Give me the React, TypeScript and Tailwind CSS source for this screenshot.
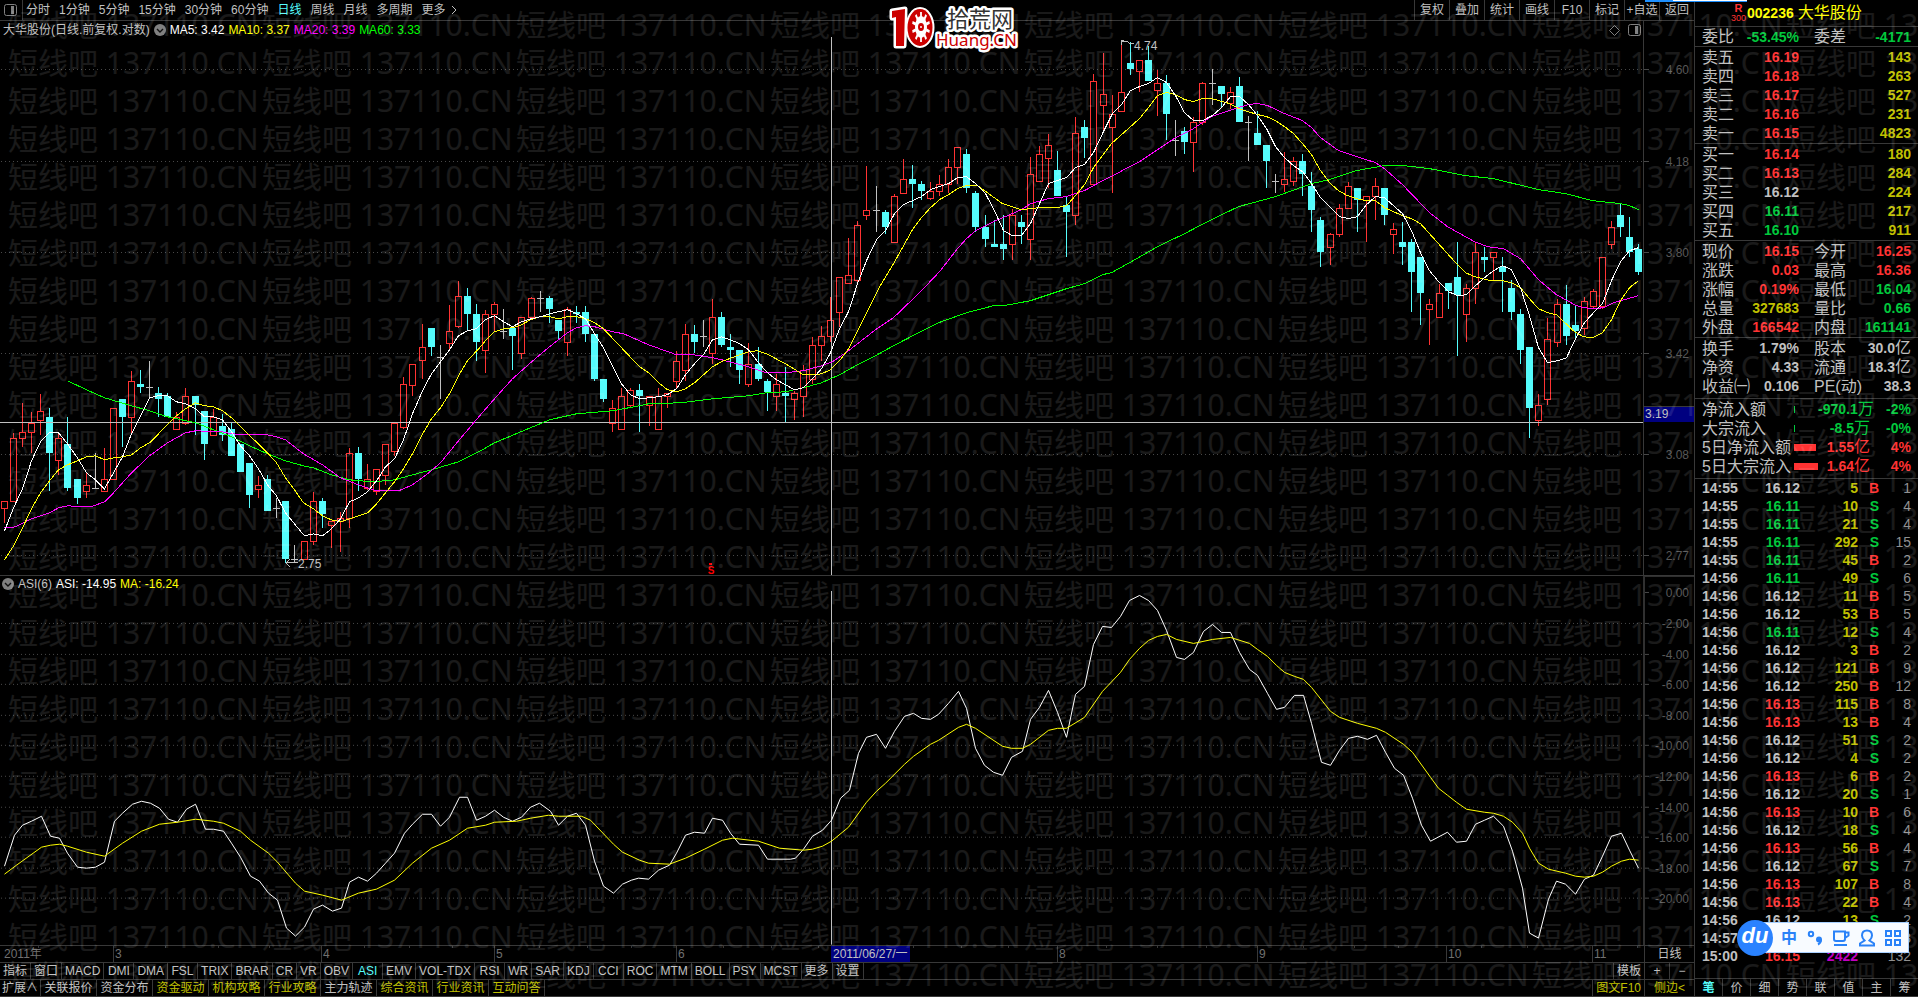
type Kind = "r" | "c" | "d";
// kind (rise, fall, doji), then y of high, body top, body bottom, low
type Candle = [Kind, number, number, number, number];

const candles: Candle[] = [
  ["r", 501, 501, 508, 523], ["r", 433, 438, 501, 501], ["r", 403, 432, 438, 447], ["r", 412, 423, 432, 453],
  ["r", 394, 411, 420, 435], ["c", 408, 417, 453, 491], ["r", 433, 438, 460, 475], ["c", 417, 444, 488, 491],
  ["c", 479, 479, 498, 504], ["r", 473, 485, 491, 498], ["d", 453, 488, 488, 489], ["r", 448, 479, 491, 491],
  ["r", 408, 408, 479, 479], ["c", 399, 399, 417, 447], ["r", 371, 381, 417, 433], ["c", 370, 384, 387, 393],
  ["d", 361, 387, 387, 397], ["c", 387, 393, 399, 417], ["c", 393, 396, 417, 417], ["r", 412, 417, 429, 429],
  ["r", 388, 396, 423, 425], ["c", 396, 396, 405, 435], ["c", 411, 411, 444, 460], ["r", 409, 417, 435, 435],
  ["c", 414, 426, 435, 441], ["c", 423, 429, 456, 456], ["c", 444, 444, 472, 472], ["c", 463, 463, 495, 508],
  ["r", 476, 485, 489, 498], ["c", 475, 479, 511, 511], ["d", 498, 508, 508, 518], ["c", 501, 501, 559, 563],
  ["d", 545, 559, 559, 563], ["r", 541, 541, 559, 559], ["r", 492, 501, 541, 545], ["c", 498, 501, 514, 528],
  ["r", 521, 521, 525, 548], ["r", 512, 518, 521, 552], ["r", 448, 453, 518, 528], ["c", 447, 453, 479, 491],
  ["r", 464, 479, 488, 490], ["r", 469, 469, 491, 495], ["r", 444, 444, 475, 485], ["r", 423, 423, 451, 456],
  ["r", 377, 384, 427, 429], ["r", 364, 364, 385, 396], ["r", 324, 347, 360, 379], ["c", 328, 328, 347, 356],
  ["d", 345, 357, 357, 399], ["r", 305, 331, 343, 349], ["r", 281, 296, 326, 328], ["c", 288, 296, 314, 330],
  ["c", 304, 314, 342, 361], ["r", 310, 314, 350, 373], ["r", 302, 304, 314, 332], ["d", 309, 331, 331, 339],
  ["c", 328, 328, 336, 370], ["r", 317, 317, 353, 359], ["r", 297, 298, 317, 317], ["d", 291, 298, 298, 312],
  ["c", 296, 298, 309, 323], ["c", 320, 320, 331, 339], ["r", 307, 309, 342, 356], ["c", 306, 312, 314, 323],
  ["c", 306, 312, 334, 342], ["c", 334, 334, 379, 381], ["c", 379, 379, 399, 402], ["r", 400, 408, 423, 432],
  ["r", 388, 396, 429, 429], ["r", 388, 390, 405, 408], ["c", 384, 390, 396, 432], ["r", 396, 396, 405, 426],
  ["r", 388, 396, 429, 429], ["r", 393, 393, 396, 408], ["r", 351, 361, 381, 388], ["r", 324, 334, 370, 381],
  ["c", 325, 334, 342, 353], ["d", 320, 336, 336, 347], ["r", 299, 317, 353, 364], ["c", 312, 317, 345, 347],
  ["c", 334, 347, 350, 367], ["c", 350, 350, 370, 384], ["r", 343, 364, 384, 387], ["c", 347, 364, 379, 381],
  ["c", 379, 381, 392, 411], ["r", 374, 384, 396, 411], ["c", 367, 393, 396, 422], ["r", 391, 393, 399, 420],
  ["r", 365, 370, 396, 417], ["r", 337, 345, 379, 384], ["r", 326, 336, 345, 361], ["r", 297, 320, 336, 342],
  ["r", 277, 277, 312, 327], ["r", 238, 275, 283, 283], ["r", 221, 225, 280, 283], ["r", 166, 210, 215, 220],
  ["d", 186, 210, 210, 232], ["c", 210, 212, 227, 234], ["r", 194, 196, 242, 242], ["r", 159, 179, 193, 193],
  ["c", 165, 179, 184, 208], ["c", 181, 184, 191, 200], ["r", 182, 191, 198, 200], ["r", 175, 184, 191, 196],
  ["r", 159, 167, 184, 193], ["r", 147, 147, 167, 184], ["c", 149, 154, 188, 193], ["c", 191, 193, 227, 232],
  ["c", 215, 227, 239, 247], ["c", 220, 244, 247, 247], ["c", 215, 244, 249, 260], ["r", 209, 215, 244, 260],
  ["c", 215, 222, 227, 244], ["r", 157, 174, 239, 260], ["r", 146, 154, 181, 181], ["r", 134, 145, 158, 188],
  ["c", 151, 170, 196, 196], ["c", 196, 205, 212, 257], ["r", 117, 133, 215, 225], ["c", 120, 127, 138, 158],
  ["r", 74, 81, 184, 184], ["r", 53, 94, 105, 130], ["r", 95, 114, 127, 193], ["r", 40, 92, 111, 111],
  ["c", 42, 63, 69, 75], ["r", 60, 60, 71, 92], ["c", 46, 60, 81, 81], ["r", 70, 83, 90, 116],
  ["c", 75, 83, 114, 140], ["d", 120, 140, 140, 156], ["c", 127, 131, 142, 154], ["r", 117, 122, 142, 172],
  ["r", 82, 83, 122, 125], ["d", 69, 83, 83, 105], ["c", 86, 86, 94, 107], ["r", 87, 92, 103, 109],
  ["c", 77, 86, 122, 122], ["d", 116, 122, 122, 161], ["c", 111, 133, 145, 145], ["c", 145, 145, 161, 188],
  ["d", 174, 181, 181, 193], ["r", 152, 179, 184, 192], ["r", 157, 161, 181, 186], ["c", 154, 161, 174, 196],
  ["c", 172, 186, 210, 232], ["c", 217, 220, 252, 267], ["r", 233, 234, 247, 265], ["r", 204, 208, 234, 237],
  ["r", 182, 186, 208, 208], ["c", 188, 188, 200, 232], ["r", 196, 196, 200, 242], ["r", 178, 186, 196, 220],
  ["c", 188, 188, 215, 225], ["r", 223, 229, 234, 254], ["c", 222, 242, 247, 265], ["c", 239, 242, 272, 312],
  ["c", 257, 257, 293, 325], ["r", 299, 304, 309, 345], ["r", 284, 293, 317, 317], ["c", 283, 283, 291, 309],
  ["c", 242, 277, 295, 356], ["r", 284, 288, 314, 342], ["r", 243, 252, 288, 304], ["c", 247, 257, 260, 272],
  ["r", 252, 252, 257, 280], ["c", 257, 267, 272, 312], ["c", 280, 288, 312, 320], ["c", 309, 314, 350, 364],
  ["c", 347, 347, 408, 438], ["r", 394, 405, 420, 426], ["r", 318, 339, 399, 405], ["r", 299, 304, 342, 347],
  ["c", 285, 304, 336, 345], ["c", 306, 325, 331, 339], ["r", 297, 301, 328, 335], ["r", 289, 291, 306, 309],
  ["r", 257, 257, 306, 309], ["r", 221, 227, 244, 249], ["c", 203, 215, 227, 237], ["c", 217, 237, 252, 257],
  ["c", 244, 249, 272, 275],
];

const ma5 = [
  530, 507, 488, 460, 441, 432, 432, 443, 457, 472, 479, 488, 472, 456, 433, 415, 397, 395, 395, 401,
  403, 408, 416, 416, 419, 431, 445, 455, 468, 484, 495, 512, 523, 535, 533, 535, 528, 518, 501, 497,
  491, 480, 466, 458, 439, 413, 390, 373, 361, 349, 335, 330, 328, 319, 315, 321, 326, 321, 318, 316,
  313, 311, 309, 313, 318, 333, 347, 365, 383, 394, 398, 397, 396, 394, 388, 374, 363, 354, 339, 336,
  339, 343, 349, 362, 372, 379, 384, 389, 387, 378, 368, 352, 328, 311, 283, 260, 239, 230, 213, 204,
  200, 196, 189, 186, 183, 177, 176, 183, 193, 210, 230, 235, 235, 223, 203, 183, 180, 177, 167, 164,
  152, 131, 113, 104, 90, 86, 83, 77, 82, 95, 112, 120, 120, 115, 107, 96, 96, 104, 115, 128,
  146, 157, 165, 171, 183, 197, 207, 216, 218, 216, 204, 196, 197, 205, 213, 230, 252, 270, 282, 291,
  295, 294, 285, 277, 270, 265, 269, 287, 315, 347, 362, 360, 357, 338, 322, 312, 303, 280, 261, 250,
  247,
];

const ma10 =
  "4,559 13,545 22,527 31,508 40,492 49,480 58,469 67,464 77,460 86,456 95,455 104,459 113,457 122,456 131,454 140,447 149,442 158,433 167,424 176,415 185,408 195,402 204,405 213,406 222,410 231,417 240,426 249,435 258,443 267,452 276,462 285,477 294,489 303,502 313,508 322,515 331,519 340,521 349,518 358,515 367,512 376,503 385,492 394,481 403,468 412,453 421,435 431,418 440,407 449,393 458,375 467,360 480,346 485,340 494,331 503,328 512,327 521,324 530,319 539,316 549,316 558,318 567,316 576,316 585,318 594,322 603,328 621,347 639,366 648,372 657,381 667,389 676,391 685,388 694,382 712,366 721,361 739,354 748,351 757,350 766,353 785,363 803,374 815,374 821,373 830,369 839,360 848,348 857,330 878,288 893,263 912,229 921,217 930,207 939,199 948,194 957,188 966,185 977,185 984,190 1002,203 1011,206 1021,209 1039,207 1057,207 1066,205 1075,195 1084,184 1093,167 1102,155 1111,143 1129,127 1139,118 1148,107 1157,95 1166,92 1175,94 1184,99 1193,101 1202,98 1211,98 1229,103 1238,108 1257,114 1266,116 1275,120 1284,126 1293,133 1302,143 1311,154 1320,170 1329,182 1338,190 1347,195 1356,198 1366,200 1375,200 1384,207 1402,215 1411,218 1420,223 1438,243 1456,263 1465,272 1474,276 1490,280 1502,280 1511,282 1520,287 1529,298 1538,308 1547,312 1556,314 1574,331 1583,336 1592,337 1602,332 1611,319 1620,300 1629,287 1638,280";
const ma20 =
  "4,527 15,526 31,518 49,512 58,507 67,505 90,506 104,501 113,492 131,472 149,455 167,442 185,432 195,430 222,431 231,433 249,434 267,434 276,436 285,439 303,453 322,464 340,477 358,484 376,490 398,490 412,484 427,473 440,462 458,440 480,414 494,398 512,378 530,362 549,346 567,332 576,327 585,325 594,326 612,331 623,333 648,344 676,354 693,354 712,357 721,359 748,366 766,372 785,372 803,370 821,365 832,361 848,350 875,329 893,317 920,291 939,271 957,248 966,238 975,230 993,221 1021,209 1030,203 1048,198 1066,196 1084,190 1102,180 1120,171 1129,166 1139,161 1157,149 1175,137 1193,128 1211,116 1220,113 1238,107 1248,104 1257,103 1267,105 1284,113 1302,120 1311,127 1320,137 1338,150 1356,156 1375,162 1384,168 1402,184 1429,212 1447,226 1474,241 1487,246 1503,248 1520,258 1538,279 1556,294 1574,304 1583,307 1593,308 1603,307 1613,302 1638,295";
const ma60 =
  "67,380 86,389 104,397 131,405 149,410 167,416 195,422 213,429 231,436 249,445 267,453 285,460 303,465 313,467 331,474 349,479 372,481 394,479 412,474 431,469 458,461 480,450 494,442 530,427 549,419 576,413 612,410 639,405 648,403 680,402 712,398 748,395 766,392 785,391 803,387 821,382 839,374 857,364 875,355 893,345 920,331 938,322 966,312 993,305 1003,305 1030,300 1057,291 1066,288 1084,283 1102,274 1111,272 1129,262 1157,246 1184,233 1211,219 1238,206 1275,196 1300,187 1311,183 1329,179 1356,170 1384,165 1403,165 1429,168 1465,175 1493,178 1538,189 1565,193 1592,200 1620,203 1629,205 1638,209";

const asi =
  "4,866 14,835 22,825 31,821 41,816 50,836 59,838 67,853 77,867 86,868 95,867 104,862 114,821 122,813 132,804 141,801 150,803 159,808 168,819 177,822 186,809 195,804 205,829 213,829 223,831 231,843 240,857 250,876 259,881 268,893 277,900 286,928 295,936 304,927 313,909 322,905 332,911 341,908 349,882 358,877 367,881 376,873 385,863 394,853 404,833 412,824 422,814 431,814 440,826 449,817 459,797 467,797 476,820 485,816 494,810 503,817 512,821 521,817 530,807 539,803 550,811 558,825 567,816 576,813 585,825 594,861 603,886 613,893 622,884 631,880 638,878 648,879 658,870 669,865 676,853 685,835 694,832 704,833 712,818 722,820 730,833 739,844 758,845 767,859 790,859 795,858 803,849 812,836 822,830 831,820 840,798 849,790 858,753 866,737 876,734 885,748 894,731 904,716 913,713 921,718 930,719 938,714 948,703 958,691 966,708 975,748 984,765 993,772 1002,775 1011,757 1022,751 1030,719 1039,707 1048,690 1057,712 1066,737 1075,694 1084,686 1093,644 1102,626 1111,627 1120,616 1129,600 1139,595 1148,600 1157,610 1166,630 1176,657 1184,659 1193,652 1203,631 1212,624 1221,632 1230,632 1239,652 1249,669 1257,675 1267,693 1276,709 1284,707 1294,695 1303,695 1311,723 1321,762 1330,765 1339,750 1348,738 1357,736 1367,739 1376,735 1385,752 1394,768 1403,775 1412,798 1421,825 1430,841 1447,832 1456,842 1466,841 1475,824 1484,820 1493,816 1503,826 1512,851 1522,888 1529,933 1538,938 1548,899 1556,881 1565,884 1575,894 1584,879 1593,875 1602,856 1611,836 1621,833 1629,850 1638,868";
const asiMa =
  "4,874 16,865 41,847 50,845 59,844 67,846 86,852 104,856 122,843 141,831 159,824 177,822 195,819 213,821 223,823 240,831 250,840 268,853 277,862 295,883 304,891 322,895 341,900 358,893 376,889 394,880 412,863 431,848 449,840 467,828 485,825 494,822 516,821 530,818 548,815 558,816 581,816 590,820 613,844 622,852 639,860 648,863 669,864 685,858 704,849 722,840 732,838 758,841 779,848 803,850 812,849 822,846 831,841 848,827 866,802 876,791 885,783 904,764 913,756 930,744 938,740 958,727 966,724 975,728 1002,746 1011,748 1022,748 1030,744 1048,730 1057,728 1066,728 1084,717 1102,691 1120,672 1129,659 1139,648 1148,640 1157,636 1166,634 1176,639 1193,643 1212,639 1230,637 1249,643 1257,649 1267,656 1276,665 1284,672 1294,676 1303,679 1311,687 1330,711 1339,717 1357,723 1376,728 1385,732 1403,744 1412,752 1430,777 1438,788 1447,795 1456,802 1466,809 1484,812 1493,813 1503,816 1512,822 1522,833 1529,848 1538,863 1548,869 1565,873 1575,876 1584,877 1593,876 1602,872 1611,866 1621,861 1629,859 1638,860";

const candleX = (i: number) => Math.floor(4.38 + 9.08 * i);

const priceTicks: [string, number][] = [
  ["4.60", 69], ["4.18", 161], ["3.80", 252], ["3.42", 353], ["3.08", 454], ["2.77", 555],
];
const asiTicks: [string, number][] = [
  ["0.00", 592], ["-2.00", 623], ["-4.00", 654], ["-6.00", 684], ["-8.00", 715], ["-10.00", 745],
  ["-12.00", 776], ["-14.00", 807], ["-16.00", 837], ["-18.00", 868], ["-20.00", 898],
];
const months: [string, number][] = [
  ["3", 113], ["4", 321], ["5", 494], ["6", 676], ["8", 1057], ["9", 1257], ["10", 1446], ["11", 1592],
];
const weekTicks = [
  38, 165, 218, 269, 364, 409, 452, 539, 587, 631, 723, 771, 818, 913, 961, 1008, 1106, 1157, 1206, 1303,
  1354, 1398, 1481, 1527, 1637,
];

const periods = ["分时", "1分钟", "5分钟", "15分钟", "30分钟", "60分钟", "日线", "周线", "月线", "多周期", "更多"];
const tools = ["复权", "叠加", "统计", "画线", "F10", "标记", "+自选", "返回"];
const indicators = [
  "指标", "窗口", "MACD", "DMI", "DMA", "FSL", "TRIX", "BRAR", "CR", "VR", "OBV", "ASI", "EMV", "VOL-TDX",
  "RSI", "WR", "SAR", "KDJ", "CCI", "ROC", "MTM", "BOLL", "PSY", "MCST", "更多", "设置",
];
const links: [string, boolean][] = [
  ["扩展∧", false], ["关联报价", false], ["资金分布", false], ["资金驱动", true], ["机构攻略", true],
  ["行业攻略", true], ["主力轨迹", false], ["综合资讯", true], ["行业资讯", true], ["互动问答", true],
];
const sideTabs = ["笔", "价", "细", "势", "联", "值", "主", "筹"];

const RED = "text-[#ff3232]";
const GREEN = "text-[#00c83c]";
const GRAY = "text-[#c0c0c0]";
const OLIVE = "text-[#c0c000]";

const sells = [
  ["卖五", "16.19", "143", RED], ["卖四", "16.18", "263", RED], ["卖三", "16.17", "527", RED],
  ["卖二", "16.16", "231", RED], ["卖一", "16.15", "4823", RED],
];
const buys = [
  ["买一", "16.14", "180", RED], ["买二", "16.13", "284", RED], ["买三", "16.12", "224", GRAY],
  ["买四", "16.11", "217", GREEN], ["买五", "16.10", "911", GREEN],
];
const quotes = [
  ["现价", "16.15", RED, "今开", "16.25", RED],
  ["涨跌", "0.03", RED, "最高", "16.36", RED],
  ["涨幅", "0.19%", RED, "最低", "16.04", GREEN],
  ["总量", "327683", OLIVE, "量比", "0.66", GREEN],
  ["外盘", "166542", RED, "内盘", "161141", GREEN],
];
const stats = [
  ["换手", "1.79%", GRAY, "股本", "30.0亿", GRAY],
  ["净资", "4.33", GRAY, "流通", "18.3亿", GRAY],
  ["收益㈠", "0.106", GRAY, "PE(动)", "38.3", GRAY],
];
const flows: [string, number, string, string, string][] = [
  ["净流入额", 1, "-970.1万", "-2%", GREEN],
  ["大宗流入", 1, "-8.5万", "-0%", GREEN],
  ["5日净流入额", 22, "1.55亿", "4%", RED],
  ["5日大宗流入", 24, "1.64亿", "4%", RED],
];
const ticks: [string, string, number, string, number][] = [
  ["14:55", "16.12", 5, "B", 1], ["14:55", "16.11", 10, "S", 4], ["14:55", "16.11", 21, "S", 4],
  ["14:55", "16.11", 292, "S", 15], ["14:55", "16.11", 45, "B", 2], ["14:56", "16.11", 49, "S", 6],
  ["14:56", "16.12", 11, "B", 5], ["14:56", "16.12", 53, "B", 5], ["14:56", "16.11", 12, "S", 4],
  ["14:56", "16.12", 3, "B", 2], ["14:56", "16.12", 121, "B", 9], ["14:56", "16.12", 250, "B", 12],
  ["14:56", "16.13", 115, "B", 8], ["14:56", "16.13", 13, "B", 4], ["14:56", "16.12", 51, "S", 2],
  ["14:56", "16.12", 4, "S", 2], ["14:56", "16.13", 6, "B", 2], ["14:56", "16.12", 20, "S", 1],
  ["14:56", "16.13", 10, "B", 6], ["14:56", "16.12", 18, "S", 4], ["14:56", "16.13", 56, "B", 4],
  ["14:56", "16.12", 67, "S", 7], ["14:56", "16.13", 107, "B", 8], ["14:56", "16.13", 22, "B", 4],
  ["14:56", "16.12", 13, "S", 2], ["14:57", "16.12", 24, "B", 3], ["15:00", "16.15", 2422, "", 132],
];

function priceColor(price: string) {
  if (price > "16.12") return RED;
  if (price < "16.12") return GREEN;
  return GRAY;
}

function PanelIcon() {
  return (
    <svg width="13" height="12" viewBox="0 0 13 12" fill="none" stroke="#808080">
      <rect x="0.5" y="0.5" width="12" height="11" rx="2" />
      <rect x="7" y="2" width="3" height="8" fill="#808080" stroke="none" />
    </svg>
  );
}

function Chevron() {
  return (
    <svg width="12" height="12" viewBox="0 0 12 12">
      <circle cx="6" cy="6" r="6" fill="#808080" />
      <path d="M3 5l3 3 3-3" fill="none" stroke="#101010" strokeWidth="1.4" />
    </svg>
  );
}

function CandleMark({ candle, x }: { candle: Candle; x: number }) {
  const [kind, high, top, bottom, low] = candle;
  const color = kind === "r" ? "#ff3232" : kind === "c" ? "#54fcfc" : "#c0c0c0";
  if (kind === "r") {
    return (
      <g fill={color}>
        <rect x={x} y={high} width="1" height={top - high} />
        <rect x={x} y={bottom} width="1" height={low - bottom} />
        <rect x={x - 2.5} y={top + 0.5} width="6" height={bottom - top} fill="none" stroke={color} />
      </g>
    );
  }
  return (
    <g fill={color}>
      <rect x={x} y={high} width="1" height={low - high} />
      <rect x={x - 3} y={top} width="7" height={Math.max(1, bottom - top)} />
    </g>
  );
}

function Axis({ marks, grid }: { marks: [string, number][]; grid: number }) {
  return (
    <g>
      {marks.map(([label, y], i) => (
        <g key={label}>
          {i >= grid && (
            <line x1="1" x2="1643" y1={y + 0.5} y2={y + 0.5} stroke="#484848" strokeDasharray="1 3" />
          )}
          <line x1="1644" x2="1649" y1={y + 0.5} y2={y + 0.5} stroke="#484848" />
          <text x="1689" y={y + 5} textAnchor="end" fontSize="12" fill="#585858">
            {label}
          </text>
        </g>
      ))}
    </g>
  );
}

function PriceChart() {
  return (
    <svg
      className="block h-full w-full"
      viewBox="0 21 1694 554"
      preserveAspectRatio="none"
      shapeRendering="crispEdges"
      role="img"
      aria-label="日线"
    >
      <Axis marks={priceTicks} grid={0} />
      <line x1="1643.5" x2="1643.5" y1="21" y2="575" stroke="#383838" />
      {candles.map((c, i) => (
        <CandleMark key={i} candle={c} x={candleX(i)} />
      ))}
      <line x1="0" x2="1643" y1="422.5" y2="422.5" stroke="#c0c0c0" />
      <line x1="831.5" x2="831.5" y1="37" y2="575" stroke="#c0c0c0" />
      <g fill="none" transform="translate(0.5 0.5)">
        <polyline points={ma60} stroke="#00ff00" />
        <polyline points={ma20} stroke="#ff00ff" />
        <polyline points={ma10} stroke="#ffff00" />
        <polyline points={ma5.map((y, i) => `${candleX(i)},${y}`).join(" ")} stroke="#ffffff" />
      </g>
      <g fill="none" stroke="#c0c0c0">
        <path d="M1121.5 41.5h6l2 2h4M1121.5 40v5M1121.5 41.5l3 -2" />
        <path d="M286.5 562.5h11M290 558.500l-4 4 4 4" />
      </g>
      <g fontSize="12" fill="#c0c0c0">
        <text x="1134" y="50">4.74</text>
        <text x="298" y="568">2.75</text>
      </g>
      <rect x="709" y="563" width="3" height="2" fill="#ff0000" />
      <text x="711" y="574" fontSize="10" fontWeight="700" textAnchor="middle" fill="#ff0000">
        S
      </text>
      <rect x="1644" y="406" width="50" height="16" fill="#000080" />
      <line x1="1644" x2="1694" y1="406.5" y2="406.5" stroke="#383838" />
      <text x="1645" y="418" fontSize="12" fill="#c0c0c0">
        3.19
      </text>
    </svg>
  );
}

function AsiChart() {
  return (
    <svg
      className="block h-full w-full"
      viewBox="0 576 1694 369"
      preserveAspectRatio="none"
      shapeRendering="crispEdges"
      role="img"
      aria-label="ASI"
    >
      <Axis marks={asiTicks} grid={1} />
      <line x1="1644" x2="1644" y1="576" y2="945" stroke="#303030" strokeWidth="2" />
      <line x1="1643" x2="1694" y1="576.5" y2="576.5" stroke="#303030" />
      <line x1="831.5" x2="831.5" y1="591" y2="945" stroke="#c0c0c0" />
      <g fill="none" transform="translate(0.5 0.5)">
        <polyline points={asi} stroke="#ffffff" />
        <polyline points={asiMa} stroke="#ffff00" />
      </g>
    </svg>
  );
}

function TimeAxis() {
  return (
    <svg
      className="block h-full min-w-0 flex-1"
      viewBox="0 946 1644 16"
      preserveAspectRatio="none"
      shapeRendering="crispEdges"
      fontSize="12"
    >
      <text x="4" y="958" fill="#707070">
        2011年
      </text>
      {weekTicks.map((x) => (
        <line key={x} x1={x + 0.5} x2={x + 0.5} y1="946" y2="948" stroke="#383838" />
      ))}
      {months.map(([label, x]) => (
        <g key={label}>
          <line x1={x + 0.5} x2={x + 0.5} y1="946" y2="962" stroke="#383838" />
          <text x={x + 2} y="958" fill="#707070">
            {label}
          </text>
        </g>
      ))}
      <rect x="831" y="946" width="79" height="16" fill="#000080" />
      <text x="833" y="958" fill="#c0c0c0">
        2011/06/27/一
      </text>
    </svg>
  );
}

function Logo() {
  const teeth = [0, 36, 72, 108, 144, 180, 216, 252, 288, 324];
  return (
    <svg className="absolute top-0 left-[888px] z-20" width="136" height="54" viewBox="0 0 136 54">
      <g stroke="#fff" strokeWidth="5" strokeLinejoin="round" fill="#fff">
        <path d="M4 11L17 9L16 46H8L8 17L4 18Z" />
        <ellipse cx="32" cy="27.500" rx="12" ry="18" />
      </g>
      <path d="M4 11L17 9L16 46H8L8 17L4 18Z" fill="#cc0000" />
      <ellipse cx="32" cy="27.500" rx="12.500" ry="18.500" fill="#cc0000" />
      <ellipse cx="33" cy="27" rx="6" ry="11" fill="#fff" />
      {teeth.map((deg) => (
        <rect
          key={deg}
          x="31.500"
          y="12"
          width="3"
          height="6"
          fill="#fff"
          transform={`translate(33 27) scale(0.6 1) rotate(${deg}) translate(-33 -27)`}
        />
      ))}
      <ellipse cx="33" cy="27" rx="3" ry="4" fill="#cc0000" />
      <circle cx="33" cy="27" r="1" fill="#fff" />
      <g stroke="#fff" strokeWidth="5" strokeLinejoin="round" style={{ paintOrder: "stroke" }}>
        <text x="59" y="27" fontSize="22" fill="#333" fontFamily="Noto Sans CJK SC, sans-serif">
          拾荒网
        </text>
        <text x="48" y="46" fontSize="17" fill="#cc0000" fontFamily="Noto Sans, sans-serif">
          Huang.CN
        </text>
      </g>
    </svg>
  );
}

function Watermark() {
  return (
    <div
      aria-hidden="true"
      className="pointer-events-none absolute inset-0 z-10 overflow-hidden pt-[6px] pl-2 font-['Noto_Sans','Noto_Sans_CJK_SC',sans-serif] text-[30px] leading-[38px] text-white/10 select-none"
    >
      {Array.from({ length: 26 }, (_, row) => (
        <div key={row} className="flex h-[38px]">
          {Array.from({ length: 8 }, (_, col) => (
            <span key={col} className="w-[254px] shrink-0 whitespace-nowrap">
              短线吧 137110.CN
            </span>
          ))}
        </div>
      ))}
    </div>
  );
}

function Toolbar() {
  return (
    <header className="flex h-[21px] shrink-0 items-stretch justify-between border-b border-[#383838]">
      <nav className="flex items-center">
        <button type="button" aria-label="面板" className="flex h-full w-[23px] items-center border-r border-[#383838] pl-1">
          <PanelIcon />
        </button>
        <div className="flex items-center gap-[9px] pl-[3px]">
          {periods.map((p) => (
            <button key={p} type="button" className={p === "日线" ? "text-[#54fcfc]" : ""}>
              {p}
            </button>
          ))}
          <svg width="6" height="10" viewBox="0 0 6 10" fill="none" stroke="#c0c0c0" className="-ml-1">
            <path d="M1 1l4 4-4 4" />
          </svg>
        </div>
      </nav>
      <nav className="flex">
        {tools.map((t) => (
          <button key={t} type="button" className="w-[35px] border-l border-[#383838] whitespace-nowrap">
            {t}
          </button>
        ))}
      </nav>
    </header>
  );
}

function BookTable({ rows }: { rows: string[][] }) {
  return (
    <section className="border-b border-[#383838] px-[7px] pt-px">
      <table className="w-full table-fixed">
        <tbody>
          {rows.map(([label, price, volume, color]) => (
            <tr key={label} className="h-[19px]">
              <th scope="row" className="w-[48px] text-left text-base leading-[19px] font-normal">
                {label}
              </th>
              <td className={`w-[49px] text-right text-sm leading-[19px] font-bold ${color}`}>{price}</td>
              <td className="text-right text-sm leading-[19px] font-bold text-[#c0c000]">{volume}</td>
            </tr>
          ))}
        </tbody>
      </table>
    </section>
  );
}

function withUnit(value: string) {
  const unit = value.slice(-1);
  if (unit !== "亿" && unit !== "万") return value;
  return (
    <>
      {value.slice(0, -1)}
      <span className="text-base leading-none font-normal">{unit}</span>
    </>
  );
}

function StatTable({ rows }: { rows: string[][] }) {
  return (
    <table className="w-full table-fixed">
      <tbody>
        {rows.map(([label, value, color, label2, value2, color2]) => (
          <tr key={label} className="h-[19px] whitespace-nowrap">
            <th scope="row" className="w-[48px] text-left text-base leading-[19px] font-normal">
              {label}
            </th>
            <td className={`w-[49px] text-right text-sm leading-[19px] font-bold ${color}`}>{value}</td>
            <th scope="row" className="w-[62px] pl-[15px] text-left text-base leading-[19px] font-normal">
              {label2}
            </th>
            <td className={`w-[50px] text-right text-sm leading-[19px] font-bold ${color2}`}>
              {withUnit(value2)}
            </td>
          </tr>
        ))}
      </tbody>
    </table>
  );
}

function Sidebar() {
  return (
    <aside className="flex w-[224px] shrink-0 flex-col border-l border-[#383838]">
      <h1 className="flex h-[27px] items-center border-b border-[#383838] pl-[35px] text-sm font-bold text-[#ffff00]">
        <span className="flex w-[17px] flex-col items-center text-[9px] leading-[10px] font-normal text-[#ff3232]">
          <b className="text-[11px]">R</b>
          300
        </span>
        002236
        <span className="pl-1 text-base font-normal">大华股份</span>
      </h1>
      <div className="flex h-5 items-center gap-[15px] border-b border-[#383838] px-[7px] text-sm font-bold text-[#00c83c]">
        <div className="flex flex-1 items-center justify-between">
          <span className="text-base leading-[19px] font-normal text-[#c0c0c0]">委比</span>-53.45%
        </div>
        <div className="flex flex-1 items-center justify-between">
          <span className="text-base leading-[19px] font-normal text-[#c0c0c0]">委差</span>-4171
        </div>
      </div>
      <BookTable rows={sells} />
      <BookTable rows={buys} />
      <section className="border-b border-[#383838] px-[7px] pt-px">
        <StatTable rows={quotes} />
      </section>
      <section className="border-b border-[#383838] px-[7px] pt-px pb-[2px]">
        <StatTable rows={stats} />
      </section>
      <section className="border-b border-[#383838] px-[7px] pt-px pb-[2px]">
        <table className="w-full table-fixed">
          <tbody>
            {flows.map(([label, bar, value, pct, color]) => (
              <tr key={label} className={`h-[19px] text-right text-sm font-bold whitespace-nowrap ${color}`}>
                <th scope="row" className="w-[92px] text-left text-base leading-[19px] font-normal text-[#c0c0c0]">
                  {label}
                </th>
                <td className="w-[24px]">
                  <div className="h-[7px] bg-current" style={{ width: bar }} />
                </td>
                <td className="w-[52px] leading-[19px]">{withUnit(value)}</td>
                <td className="leading-[19px]">{pct}</td>
              </tr>
            ))}
          </tbody>
        </table>
      </section>
      <section className="min-h-0 flex-1 overflow-hidden px-[7px]">
        <table className="w-full table-fixed text-right text-sm leading-[18px] font-bold">
          <tbody>
            {ticks.map(([time, price, volume, side, count], i) => (
              <tr key={i} className="h-[18px]">
                <td className="w-[45px] text-left">{time}</td>
                <td className={`w-[53px] ${priceColor(price)}`}>{price}</td>
                <td className={`w-[58px] ${volume > 999 ? "text-[#c000c0]" : OLIVE}`}>{volume}</td>
                <td className={`w-[21px] ${side === "B" ? RED : GREEN}`}>{side}</td>
                <td className="font-normal text-[#909090]">{count}</td>
              </tr>
            ))}
          </tbody>
        </table>
      </section>
      <nav className="flex h-[19px] border-y border-[#383838]">
        {sideTabs.map((t, i) => (
          <button
            key={t}
            type="button"
            className={`flex-1 border-r border-[#383838] last:border-r-0 ${i === 0 ? "font-bold text-[#54fcfc]" : ""}`}
          >
            {t}
          </button>
        ))}
      </nav>
    </aside>
  );
}

function InputBar() {
  return (
    <div className="absolute right-[9px] bottom-[44px] z-30 flex h-[31px] w-[154px] items-center border border-[#a8d0ff] bg-[#f8fbff] pl-[20px] text-[#2a82f8]">
      <div className="absolute -left-[19px] flex size-9 items-center justify-center rounded-full bg-[#2a82ff] pb-1 text-[22px] font-bold text-white italic">
        du
      </div>
      <button type="button" className="w-[26px] text-base leading-[29px] font-bold">
        中
      </button>
      <button type="button" aria-label="标点" className="flex w-[26px] justify-center">
        <svg width="18" height="18" viewBox="0 0 18 18" fill="none" stroke="currentColor" strokeWidth="2">
          <circle cx="5" cy="5" r="2.200" />
          <path d="M15 10.500q0 3.500 -3 5" />
          <circle cx="13" cy="10.500" r="2" fill="currentColor" />
        </svg>
      </button>
      <button type="button" aria-label="皮肤" className="flex w-[26px] justify-center">
        <svg width="18" height="18" viewBox="0 0 18 18" fill="none" stroke="currentColor" strokeWidth="2">
          <path d="M2 2.500h11v7.500q0 2 -2 2H4q-2 0 -2 -2zM13 3.500h3.500v3l-3.500 2.500M2 16h13" />
        </svg>
      </button>
      <button type="button" aria-label="用户" className="flex w-[26px] justify-center">
        <svg width="18" height="18" viewBox="0 0 18 18" fill="none" stroke="currentColor" strokeWidth="2">
          <path d="M6.500 11.500Q4 9 4 6.500Q4 1.500 9 1.500T14 6.500Q14 9 11.500 11.500L16 14.500V16.500H2V14.500Z" />
        </svg>
      </button>
      <button type="button" aria-label="菜单" className="flex w-[26px] justify-center">
        <svg width="18" height="18" viewBox="0 0 18 18" fill="none" stroke="currentColor" strokeWidth="2">
          <path d="M2 2h5v5H2zM11 2h5v5h-5zM2 11h5v5H2zM11 11h5v5h-5z" />
        </svg>
      </button>
    </div>
  );
}

export default function App() {
  return (
    <div className="relative flex h-screen overflow-hidden bg-black font-['Liberation_Sans','Noto_Sans_CJK_SC',sans-serif] text-xs text-[#c0c0c0]">
      <main className="flex min-w-0 flex-1 flex-col">
        <Toolbar />
        <section className="relative min-h-0 flex-[555] border-b border-[#383838]">
          <PriceChart />
          <div className="absolute inset-x-0 top-0 flex h-[18px] items-center justify-between pr-[53px] pl-[3px]">
            <div className="flex items-center gap-1 whitespace-nowrap">
              <h2>大华股份(日线.前复权.对数)</h2>
              <button type="button" aria-label="均线">
                <Chevron />
              </button>
              <span className="text-white">MA5: 3.42</span>
              <span className="text-[#ffff00]">MA10: 3.37</span>
              <span className="text-[#ff00ff]">MA20: 3.39</span>
              <span className="text-[#00ff00]">MA60: 3.33</span>
            </div>
            <div className="flex items-center gap-2">
              <svg width="11" height="11" viewBox="0 0 11 11" fill="none" stroke="#808080">
                <path d="M5.500 .5l5 5-5 5-5-5z" />
              </svg>
              <PanelIcon />
            </div>
          </div>
        </section>
        <section className="relative min-h-0 flex-[369]">
          <AsiChart />
          <div className="absolute top-0 left-0 flex h-4 items-center gap-1 pl-[2px] whitespace-nowrap">
            <button type="button" aria-label="指标">
              <Chevron />
            </button>
            <h2>ASI(6)</h2>
            <span className="text-white">ASI: -14.95</span>
            <span className="text-[#ffff00]">MA: -16.24</span>
          </div>
        </section>
        <div className="flex h-[17px] shrink-0 border-t border-[#383838]">
          <TimeAxis />
          <div className="w-[50px] border-l border-[#383838] text-center leading-4">日线</div>
        </div>
        <div className="flex h-[17px] shrink-0 justify-between border-t border-[#383838] leading-4">
          <nav className="flex">
            {indicators.map((name, i) => (
              <button
                key={i}
                type="button"
                className={`border-r border-[#383838] px-[3px] whitespace-nowrap ${name.length === 3 ? "min-w-[30px]" : ""} ${name === "ASI" ? "text-[#54fcfc]" : ""}`}
              >
                {name}
              </button>
            ))}
          </nav>
          <div className="flex">
            <button type="button" className="border-l border-[#383838] px-[3px]">
              模板
            </button>
            <button type="button" className="w-[25px] border-l border-[#383838]">
              +
            </button>
            <button type="button" className="w-[25px] border-l border-[#383838]">
              −
            </button>
          </div>
        </div>
        <div className="flex h-[18px] shrink-0 justify-between border-y border-[#383838] leading-4">
          <nav className="flex">
            {links.map(([name, hot]) => (
              <a
                key={name}
                href="#"
                className={`w-14 border-r border-[#383838] text-center whitespace-nowrap first:w-[41px] ${hot ? OLIVE : ""}`}
              >
                {name}
              </a>
            ))}
          </nav>
          <div className="flex text-[#c0c000]">
            <a href="#" className="border-l border-[#383838] px-[3px] whitespace-nowrap">
              图文F10
            </a>
            <button type="button" className="w-[50px] border-l border-[#383838]">
              侧边&lt;
            </button>
          </div>
        </div>
      </main>
      <Sidebar />
      <div className="absolute top-0 right-[171px] z-20 flex h-[2px] w-[102px] bg-[#1e90ff]">
        <div className="ml-[28px] h-px flex-1 bg-white" />
      </div>
      <Watermark />
      <Logo />
      <InputBar />
    </div>
  );
}
